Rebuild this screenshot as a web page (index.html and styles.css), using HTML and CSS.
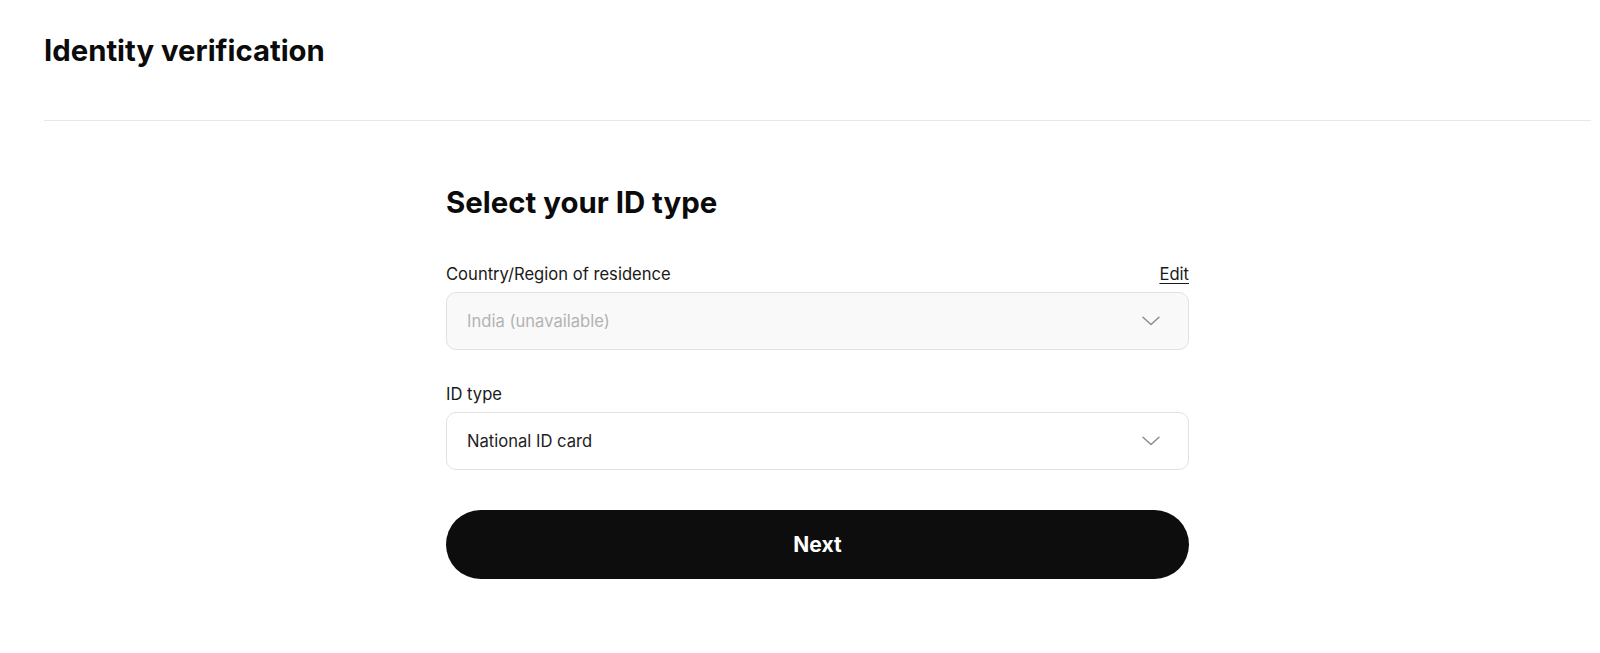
FILE: index.html
```html
<!DOCTYPE html>
<html lang="en">
<head>
<meta charset="utf-8">
<title>Identity verification</title>
<link rel="stylesheet" href="styles.css">
</head>
<body>
<div class="page">
  <header class="header">
    <h1 class="title">Identity verification</h1>
  </header>
  <main class="main">
    <div class="form">
      <h2 class="heading">Select your ID type</h2>
      <div class="field">
        <div class="label-row">
          <span class="label">Country/Region of residence</span>
          <a class="edit" href="#">Edit</a>
        </div>
        <div class="select select-disabled">
          <span class="select-text placeholder">India (unavailable)</span>
          <svg class="chevron" width="18" height="10" viewBox="0 0 18 10"><path d="M1 1.2 L9 8.6 L17 1.2" fill="none" stroke="#8a8a8a" stroke-width="1.4" stroke-linecap="round" stroke-linejoin="round"/></svg>
        </div>
      </div>
      <div class="field field-second">
        <div class="label-row">
          <span class="label">ID type</span>
        </div>
        <div class="select">
          <span class="select-text">National ID card</span>
          <svg class="chevron" width="18" height="10" viewBox="0 0 18 10"><path d="M1 1.2 L9 8.6 L17 1.2" fill="none" stroke="#8a8a8a" stroke-width="1.4" stroke-linecap="round" stroke-linejoin="round"/></svg>
        </div>
      </div>
      <button class="next" type="button">Next</button>
    </div>
  </main>
</div>
</body>
</html>
```

FILE: styles.css
```css
* { box-sizing: border-box; }
html, body { margin: 0; padding: 0; background: #fff; }
body {
  font-family: Inter, "Noto Sans", "Liberation Sans", sans-serif;
  color: #111;
}
.page {
  padding: 0 9px 0 44px;
}
.header {
  padding-top: 33px;
  padding-bottom: 51px;
  border-bottom: 1px solid #e8e8e8;
}
.title {
  margin: 0;
  font-size: 29.3px;
  line-height: 36px;
  font-weight: 700;
  color: #0b0b0b;
}
.main {
  display: flex;
  justify-content: center;
  padding-top: 64px;
}
.form {
  width: 743px;
  display: flex;
  flex-direction: column;
}
.heading {
  margin: 0 0 42px;
  font-size: 29.4px;
  line-height: 36px;
  font-weight: 700;
  color: #0b0b0b;
}
.field { display: flex; flex-direction: column; gap: 7px; }
.field-second { margin-top: 33px; }
.label-row {
  display: flex;
  justify-content: space-between;
  align-items: baseline;
  height: 22px;
}
.label {
  font-size: 16.6px;
  line-height: 22px;
  color: #1a1a1a;
}
.edit {
  font-size: 16.6px;
  line-height: 22px;
  color: #1a1a1a;
  text-decoration: underline;
  text-underline-offset: 3px;
}
.select {
  height: 58px;
  border: 1px solid #e2e2e2;
  border-radius: 10px;
  background: #fff;
  display: flex;
  align-items: center;
  justify-content: space-between;
  padding: 0 28px 0 20px;
}
.select-disabled { background: #f9f9f9; }
.select-text {
  font-size: 16.6px;
  color: #222;
}
.placeholder { color: #b3b3b3; }
.chevron { display: block; }
.next {
  margin-top: 40px;
  height: 69px;
  border: none;
  border-radius: 35px;
  background: #0d0d0d;
  color: #fff;
  font-family: inherit;
  font-size: 21px;
  font-weight: 700;
  cursor: pointer;
}
```
